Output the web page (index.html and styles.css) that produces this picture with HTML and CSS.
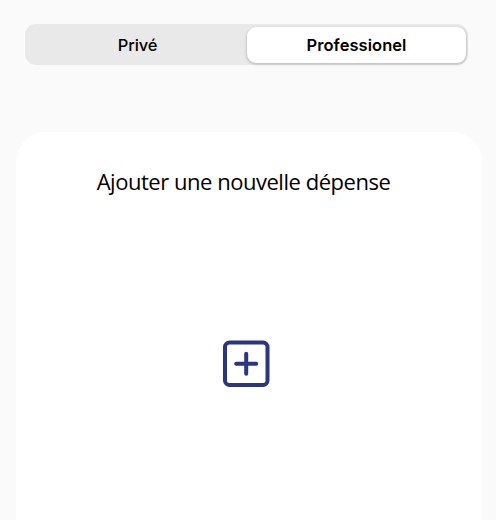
FILE: index.html
```html
<!DOCTYPE html>
<html lang="fr">
<head>
<meta charset="utf-8">
<title>Dépenses</title>
<link rel="stylesheet" href="styles.css">
</head>
<body>
<div class="segmented">
  <button class="segment">Privé</button>
  <button class="segment active">Professionel</button>
</div>
<main class="card">
  <h1 class="title">Ajouter une nouvelle dépense</h1>
  <button class="add" aria-label="Ajouter">
    <svg width="48" height="48" viewBox="0 0 48 48" fill="none" stroke="#2b367e" stroke-width="4">
      <rect x="3" y="2.5" width="42.5" height="42.5" rx="4.5"/>
      <path d="M24.2 13.7v20M14.2 23.7h20" stroke-linecap="round"/>
    </svg>
  </button>
</main>
</body>
</html>
```

FILE: styles.css
```css
* { box-sizing: border-box; }
body {
  margin: 0;
  height: 520px;
  overflow: hidden;
  display: flex;
  flex-direction: column;
  background: #fafafa;
  color: #000;
  font-family: Inter, sans-serif;
}
button { border: 0; padding: 0; background: none; color: inherit; font: inherit; }
.segmented {
  display: grid;
  grid-template-columns: 219px 219px;
  flex: none;
  height: 41px;
  margin: 24px 28px 0 25px;
  padding: 2.5px 3px;
  border-radius: 11px;
  background: #e9e9e9;
}
.segment { font-size: 16.5px; font-weight: 500; letter-spacing: -.15px; border-radius: 9px; }
.segment.active {
  font-weight: 600;
  letter-spacing: .05px;
  background: #fff;
  box-shadow: 0 1px 2px 1px rgba(0, 0, 0, .15);
}
.card {
  flex: 1;
  display: flex;
  flex-direction: column;
  align-items: center;
  margin: 67px 14px 0 16px;
  padding: 33px 0 0;
  border-radius: 30px 30px 0 0;
  background: #fff;
}
.title {
  margin: 0 11px 0 0;
  font: 400 22px/32px "Open Sans", sans-serif;
  letter-spacing: -.47px;
  white-space: nowrap;
}
.add { margin: 143px 6px 0 0; height: 48px; }
.add svg { display: block; }
```
